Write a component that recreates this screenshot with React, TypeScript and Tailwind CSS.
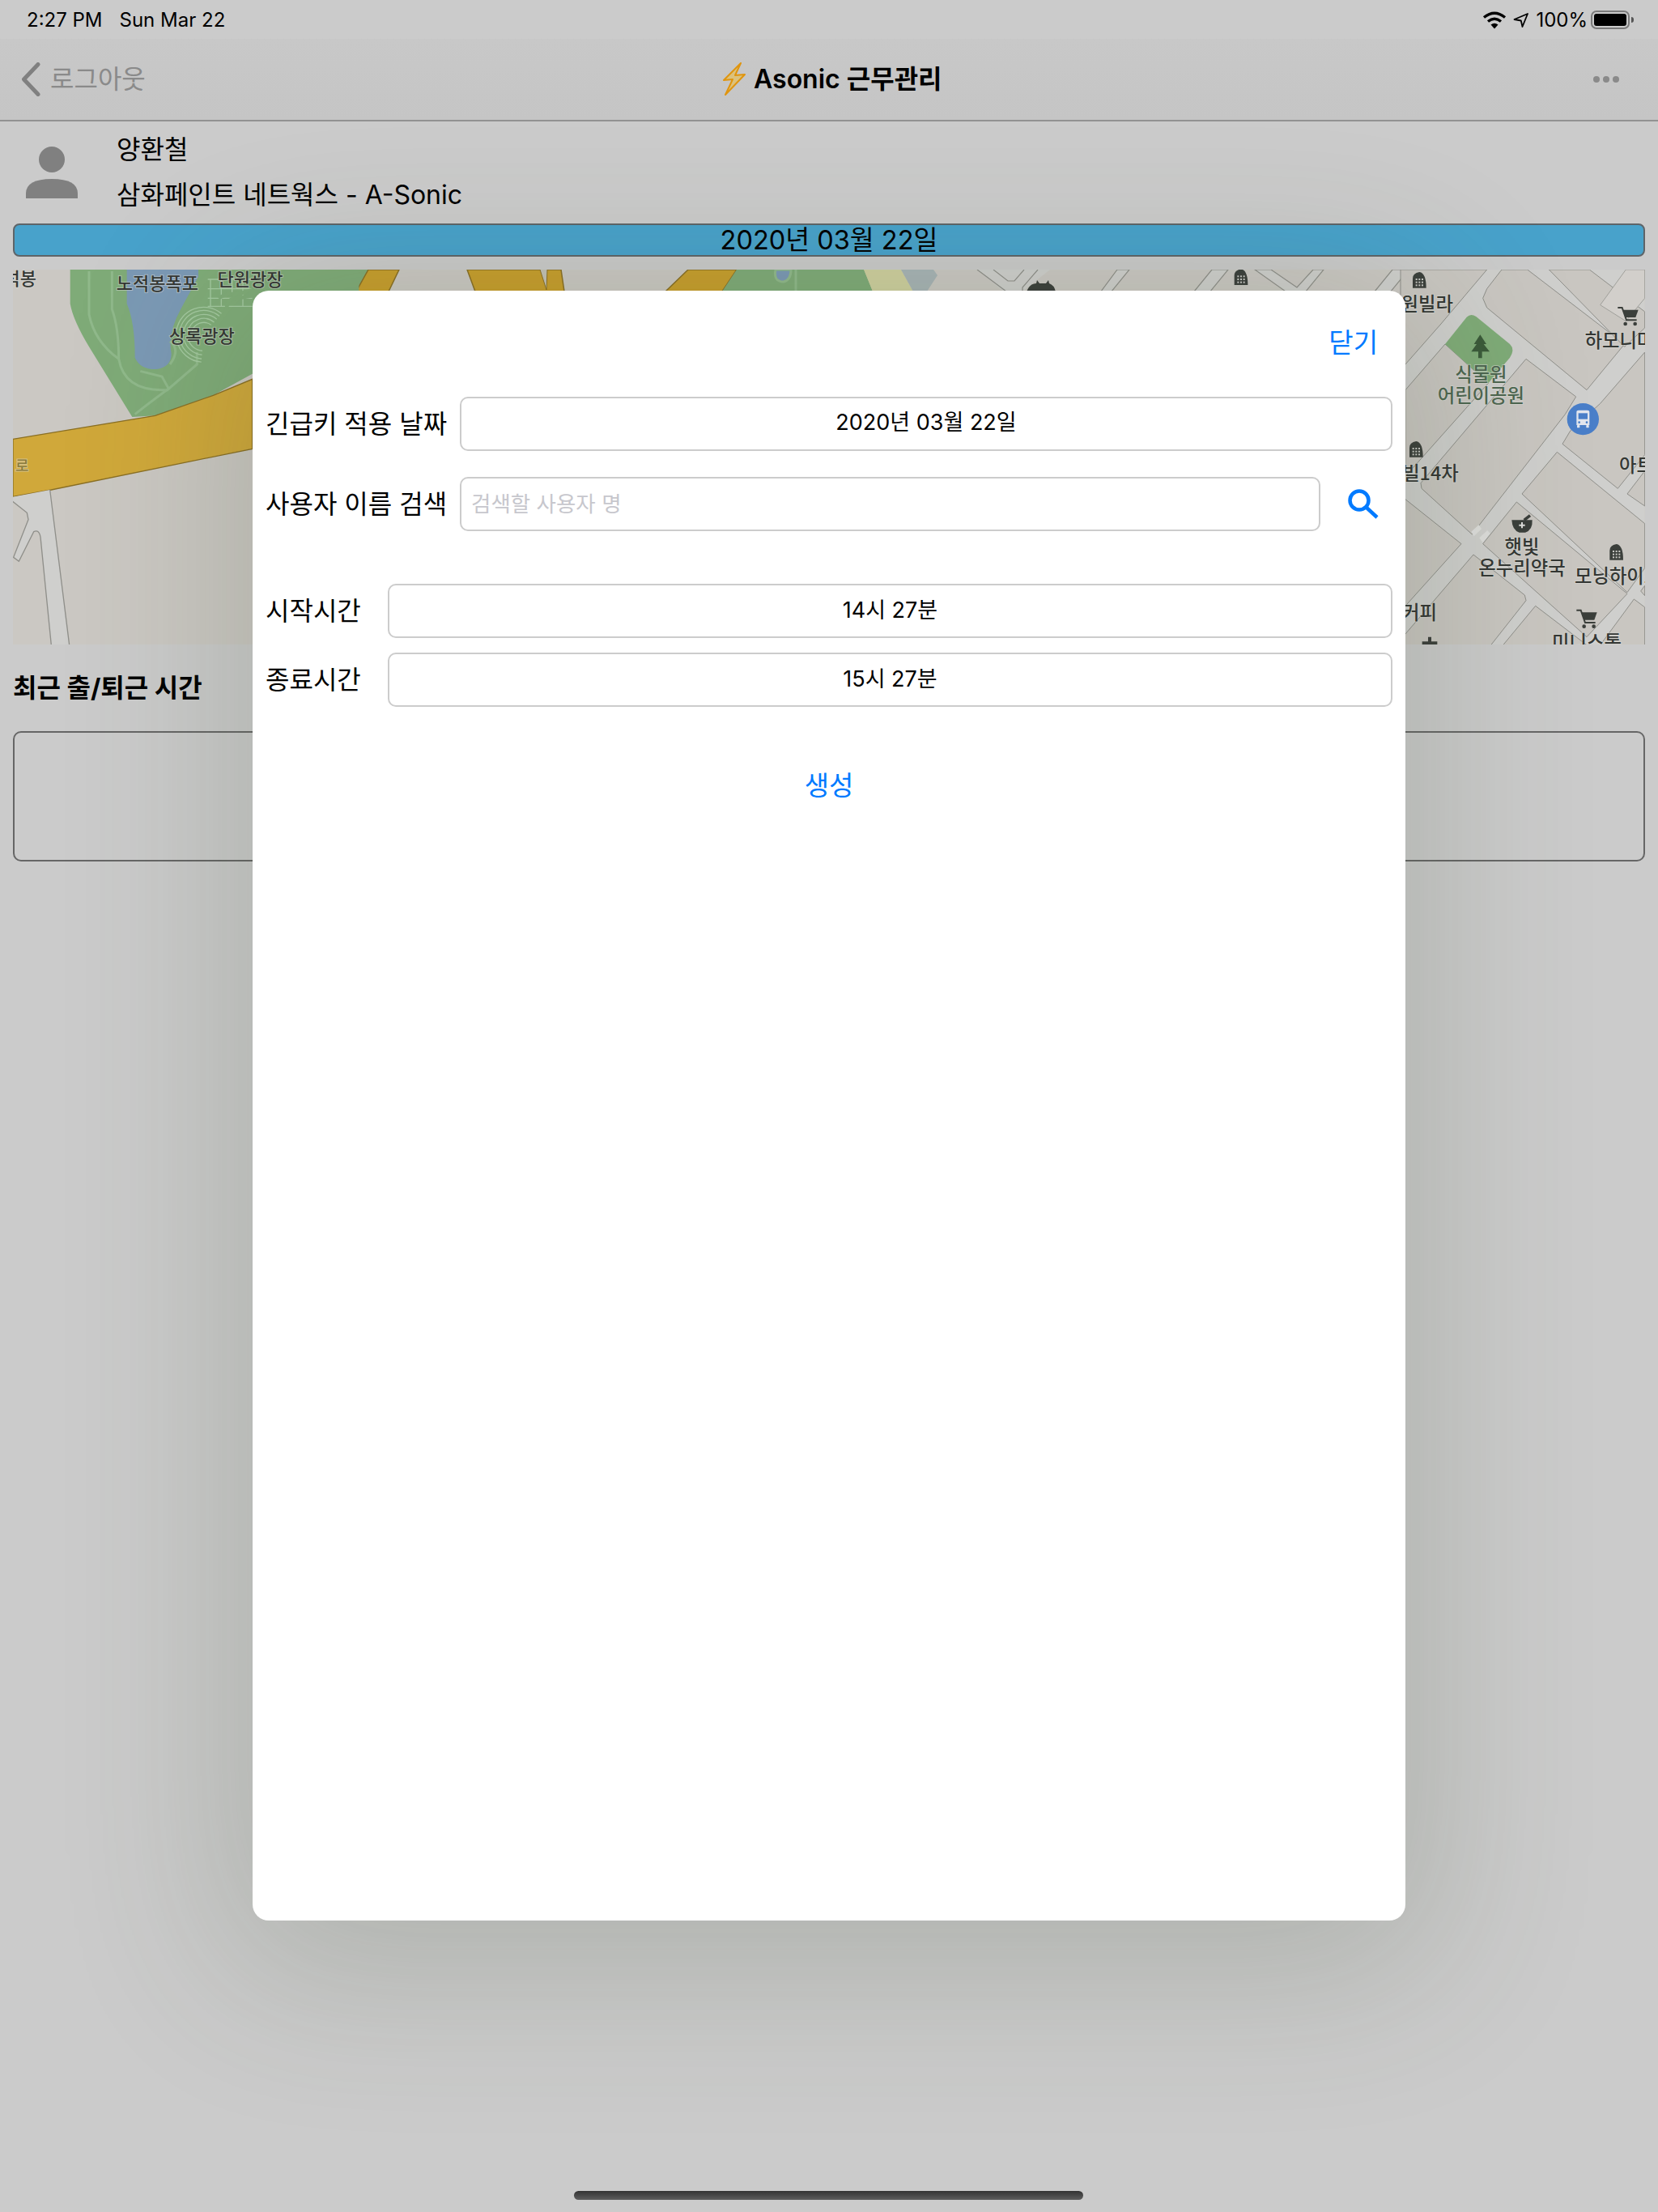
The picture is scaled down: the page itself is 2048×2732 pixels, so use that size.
const blocks = [
  "0,24 320,24 150,225 18,375 0,375",
  "375,24 470,24 830,300 690,470 320,165 305,130 320,95",
  "550,24 700,24 905,180 905,240 830,310",
  "18,470 165,300 325,445 18,790",
  "465,355 650,495 610,560 265,1005 78,835 75,815",
  "740,520 905,330 905,710 805,835 600,670 630,620",
  "580,700 905,965 905,1130 840,1220 450,855",
  "840,855 905,770 905,900",
  "430,885 840,1225 690,1385 305,1040",
  "0,875 18,875 225,1040 18,1270 0,1290",
  "270,1080 460,1230 465,1250 335,1415 0,1415 0,1395",
  "500,1270 690,1415 380,1415",
  "865,1245 905,1275 905,1415 740,1415",
  "890,1215 905,1195 905,1232",
];

function arc(r: number, from: number, to: number) {
  const cx = 725;
  const cy = 265;
  const p = (a: number) => {
    const t = (a * Math.PI) / 180;
    return `${(cx + r * Math.cos(t)).toFixed(1)},${(cy + r * Math.sin(t)).toFixed(1)}`;
  };
  return `M${p(from)} A${r},${r} 0 0 1 ${p(to)}`;
}

function Building({ x, y }: { x: number; y: number }) {
  return (
    <g transform={`translate(${x} ${y})`}>
      <path d="M-25,27 V-8 Q-25,-28 0,-32 Q25,-28 25,27 Z" fill="#3b3f3b" />
      {[-8, 3, 14].map((wy) =>
        [-14, -3, 8].map((wx) => <rect key={`${wx}-${wy}`} x={wx} y={wy} width="6" height="6" fill="#c8c8c4" />),
      )}
    </g>
  );
}

function Cart({ x, y }: { x: number; y: number }) {
  return (
    <g transform={`translate(${x} ${y})`}>
      <path d="M-40,-32 H-24 L-8,14 H30" fill="none" stroke="#3b3f3b" strokeWidth="6" />
      <path d="M-22,-24 H36 L26,4 H-12 Z" fill="#3b3f3b" />
      <circle cx="-12" cy="28" r="7" fill="#3b3f3b" />
      <circle cx="24" cy="28" r="7" fill="#3b3f3b" />
    </g>
  );
}

function MapLabel({ x, y, children, anchor = "middle", fill = "#343734", size = 66 }: { x: number; y: number; children: string; anchor?: "start" | "middle" | "end"; fill?: string; size?: number }) {
  return (
    <text
      x={x}
      y={y}
      textAnchor={anchor}
      fontSize={size}
      fontWeight={500}
      fontFamily="'Noto Sans CJK KR', sans-serif"
      fill={fill}
      stroke="#dcdcd8"
      strokeOpacity={0.5}
      strokeWidth={6}
      paintOrder="stroke"
      dominantBaseline="central"
    >
      {children}
    </text>
  );
}

function MapArt() {
  return (
    <svg viewBox="16 333 2016 463" className="block w-full h-full">
      <rect x="16" y="333" width="2016" height="463" fill="#cbc8c3" />
      {/* strip under the sheet's top edge */}
      <polygon points="300,333 1067,333 1078,360 300,360" fill="#7fab78" />
      <polygon points="422,333 442,333 422,360 403,360" fill="#a9c3a4" />
      <polygon points="493,333 850,333 823,360 480,360" fill="#cbc8c3" />
      <polygon points="455,333 493,333 480,360 440,360" fill="#c89e2c" stroke="#8a6f24" strokeWidth="1.5" />
      <polygon points="577,333 693,333 697,360 587,360" fill="#c89e2c" stroke="#8a6f24" strokeWidth="1.5" />
      <path d="M667,333 L675,358 L676,333" fill="#c4c1b4" stroke="#8a6f24" strokeWidth="1" />
      <polygon points="850,333 910,333 892,360 822,360" fill="#c89e2c" stroke="#8a6f24" strokeWidth="1.5" />
      <polygon points="910,333 1067,333 1078,360 892,360" fill="#7fab78" />
      <path d="M958,333 Q955,348 968,348 Q977,346 977,333 Z" fill="#7b99b5" stroke="#90b98b" strokeWidth="3" />
      <path d="M983,333 V360" stroke="#90b98b" strokeWidth="3" />
      <polygon points="1067,333 1113,333 1128,360 1078,360" fill="#cfd09f" />
      <polygon points="1113,333 1153,333 1158,340 1145,360 1128,360" fill="#a8b4b6" />
      <polygon points="1207,333 1297,333 1263,360 1240,360" fill="#cfcfcd" />
      <path d="M1207,333 L1243,360 M1282,333 L1263,355 V360" stroke="#8f8f8a" strokeWidth="1.2" fill="none" />
      <path d="M1227,333 L1245,347 H1253 L1265,333" stroke="#8f8f8a" strokeWidth="1.2" fill="none" />
      <path d="M1268,360 Q1272,350 1280,350 L1281,346 L1284,350 H1292 L1295,346 L1296,350 Q1302,352 1304,360 Z" fill="#3b3f3b" />
      {[
        "1380,333 1395,333 1373,360 1360,360",
        "1497,333 1517,333 1495,360 1475,360",
        "1550,333 1570,333 1602,355 1622,333 1635,333 1613,360 1588,360",
        "1720,333 1740,333 1718,360 1698,360",
      ].map((p) => (
        <polygon key={p} points={p} fill="#cfcfcd" stroke="#8f8f8a" strokeWidth="1.2" />
      ))}
      <g transform="translate(1533 343) scale(0.333)">
        <Building x={0} y={0} />
      </g>

      {/* left piece */}
      <g transform="translate(10 325) scale(0.33333)">
        <path d="M230,0 V150 Q240,210 300,310 L460,570 L545,565 L760,490 L905,410 L1300,200 V0 Z" fill="#7fab78" />
        <path d="M440,0 V150 Q470,220 470,350 Q490,395 550,393 Q605,385 605,335 Q590,260 640,170 L705,50 V0 Z" fill="#7b99b5" />
        <g fill="none" stroke="#90b98b" strokeWidth="9">
          <path d="M300,30 V190 Q320,290 410,355" />
          <path d="M385,30 V170 Q410,240 410,355 Q430,470 570,470 L590,470 L700,375 V330" />
          <path d="M470,560 Q520,520 595,465 L570,420 L490,400" />
          <path d="M600,375 Q640,320 600,290" />
        </g>
        <g fill="none" stroke="#a4c9a0" strokeWidth="4">
          {[45, 60, 75, 90, 102].map((r) => (
            <path key={r} d={arc(r, 190, 310)} />
          ))}
          {[60, 75, 90, 102].map((r) => (
            <path key={r} d={arc(r, 95, 165)} />
          ))}
          <path d="M740,60 H905 M740,95 H905 M740,130 H905 M740,160 H905 M750,60 V160 M790,60 V160 M830,60 V120 M870,60 V160" />
        </g>
        <path d="M780,130 Q810,110 850,115 L905,100 V120 L850,130 Q810,130 810,170 Q800,220 745,240" fill="none" stroke="#7fab78" strokeWidth="14" />
        <path d="M18,652 L545,565 L760,490 L905,430 V688 L160,840 L18,865 Z" fill="#d0a83a" stroke="#8a6f24" strokeWidth="4" />
        <path d="M18,885 L70,925 L75,950 L20,1090 L40,1105 L95,995 Q115,985 120,1015 L160,1415 H227 L155,840 L18,866 Z" fill="#cfcfcd" stroke="none" />
        <path d="M0,870 L70,925 L75,950 L20,1090 L40,1105 L95,995 Q115,985 120,1015 L160,1415 M227,1415 L155,840" fill="none" stroke="#8f8f8a" strokeWidth="4" />
        <MapLabel x={105} y={50} anchor="end">석봉</MapLabel>
        <MapLabel x={553} y={69}>노적봉폭포</MapLabel>
        <MapLabel x={897} y={55}>단원광장</MapLabel>
        <MapLabel x={718} y={265}>상록광장</MapLabel>
        <MapLabel x={52} y={748} fill="#8a7a3a" size={54}>로</MapLabel>
      </g>

      {/* right piece */}
      <g transform="translate(1730 325) scale(0.33333)">
        <rect x="0" y="24" width="905" height="1391" fill="#cfcfcd" />
        {blocks.map((p) => (
          <polygon key={p} points={p} fill="#c9c6c1" stroke="#8f8f8a" strokeWidth="3" strokeLinejoin="round" />
        ))}
        <polygon points="740,155 835,24 905,24 905,130 835,215" fill="#d2cfcb" stroke="#a0a09b" strokeWidth="3" />
        <path d="M165,300 L245,200 Q260,185 280,198 L405,300 Q425,320 405,350 L325,445 Z" fill="#7fab78" />
        <path d="M295,265 L318,300 H308 L330,328 H302 V352 H288 V328 H262 L282,300 H272 Z" fill="#3b5a3a" />
        <polygon points="262,995 290,970 300,985 272,1012" fill="#dededc" />
        <polygon points="292,1018 322,990 332,1002 305,1035" fill="#dededc" />
        <Building x={70} y={65} />
        <Building x={58} y={692} />
        <Building x={800} y={1073} />
        <Cart x={845} y={197} />
        <Cart x={692} y={1318} />
        <g>
          <path d="M412,952 H488 Q490,990 462,998 H440 Q414,990 412,952 Z" fill="#3b3f3b" />
          <path d="M458,952 L480,935" stroke="#3b3f3b" strokeWidth="11" />
          <path d="M450,960 V982 M439,971 H461" stroke="#dededc" strokeWidth="6" />
        </g>
        <path d="M108,1385 V1415 M80,1408 H136" stroke="#3b3f3b" strokeWidth="12" />
        <circle cx="676" cy="578" r="59" fill="#4a7fc9" />
        <g fill="#e2e6ee">
          <path d="M652,552 Q652,545 660,545 H692 Q700,545 700,552 V600 H652 Z" />
          <rect x="654" y="600" width="10" height="10" rx="2" />
          <rect x="688" y="600" width="10" height="10" rx="2" />
        </g>
        <rect x="659" y="556" width="34" height="22" fill="#4a7fc9" />
        <circle cx="662" cy="590" r="4" fill="#4a7fc9" />
        <circle cx="690" cy="590" r="4" fill="#4a7fc9" />
        <MapLabel x={195} y={147} anchor="end" size={70}>원빌라</MapLabel>
        <MapLabel x={298} y={408} fill="#4d6650" size={70}>식물원</MapLabel>
        <MapLabel x={298} y={485} fill="#4d6650" size={70}>어린이공원</MapLabel>
        <MapLabel x={683} y={283} anchor="start" size={70}>하모니마트</MapLabel>
        <MapLabel x={215} y={775} anchor="end" size={70}>탑빌14차</MapLabel>
        <MapLabel x={810} y={745} anchor="start" size={70}>아트빌</MapLabel>
        <MapLabel x={450} y={1048} size={70}>햇빛</MapLabel>
        <MapLabel x={450} y={1125} size={70}>온누리약국</MapLabel>
        <MapLabel x={645} y={1155} anchor="start" size={70}>모닝하이츠</MapLabel>
        <MapLabel x={135} y={1290} anchor="end" size={70}>커피</MapLabel>
        <MapLabel x={690} y={1400} size={70}>미니스톱</MapLabel>
      </g>
    </svg>
  );
}

function StatusBar() {
  return (
    <div className="h-[48px] flex items-center justify-between pl-[33px] pr-[30px] pt-[1px] text-[24px] text-black">
      <div className="flex gap-[21px]">
        <span>2:27 PM</span>
        <span>Sun Mar 22</span>
      </div>
      <div className="flex items-center">
        <svg width="30" height="22" viewBox="0 0 30 22" className="mr-[8px]">
          <g fill="none" stroke="#000" strokeWidth="3.4">
            <path d="M2,7.5 Q15,-3 28,7.5" />
            <path d="M7,12.5 Q15,6 23,12.5" />
          </g>
          <path d="M10.5,16.5 Q15,13 19.5,16.5 L15,21.5 Z" fill="#000" />
        </svg>
        <svg width="20" height="20" viewBox="0 0 20 20" className="mr-[8px]">
          <path d="M1.5,9 L18,2 L11.5,18 L9.8,10.5 Z" fill="none" stroke="#000" strokeWidth="1.8" strokeLinejoin="round" />
        </svg>
        <span className="mr-[4px]">100%</span>
        <div className="w-[48px] h-[23px] border-2 border-[#7a7a7a] rounded-[7px] p-[2px]">
          <div className="w-full h-full bg-black rounded-[3px]" />
        </div>
        <div className="w-[3px] h-[7px] ml-[2px] bg-[#555555] rounded-r-[3px]" />
      </div>
    </div>
  );
}

function NavBar() {
  return (
    <div className="h-[102px] relative flex items-center justify-between pl-[26px] pr-[48px] border-b-2 border-[#929292] bg-gradient-to-b from-[#c8c8c8] to-[#c5c5c5]">
      <div className="flex items-center gap-[12px] text-[#8a8a8a]">
        <svg width="24" height="42" viewBox="0 0 24 42">
          <path d="M21,2.5 L3.5,21 L21,39.5" fill="none" stroke="#808080" strokeWidth="5" strokeLinecap="round" strokeLinejoin="round" />
        </svg>
        <span className="text-[32px] leading-none">로그아웃</span>
      </div>
      <div className="absolute left-[893px] top-0 h-full flex items-center gap-[10px]">
        <svg width="28" height="42" viewBox="0 0 28 42">
          <path d="M22,1 L1,22 L12,21 L3,40 L27,15 L15,16 Z" fill="#dcc27c" stroke="#e0950f" strokeWidth="2" strokeLinejoin="round" />
        </svg>
        <span className="text-[32px] font-semibold leading-none text-black">Asonic 근무관리</span>
      </div>
      <div className="flex gap-[4px]">
        <div className="w-[8px] h-[8px] rounded-full bg-[#8a8a8a]" />
        <div className="w-[8px] h-[8px] rounded-full bg-[#8a8a8a]" />
        <div className="w-[8px] h-[8px] rounded-full bg-[#8a8a8a]" />
      </div>
    </div>
  );
}

function Sheet() {
  const input = "h-[67px] border-2 border-[#cccccc] rounded-[10px] flex items-center bg-white";
  const label = "text-[32px] leading-none text-black whitespace-nowrap";
  return (
    <div className="absolute left-[312px] top-[359px] w-[1424px] h-[2013px] bg-white rounded-[20px] shadow-[0_30px_210px_30px_rgba(60,75,50,0.2)] pl-[16px] pr-[16px] pt-[44px]">
      <div className="flex justify-end pr-[18px] h-[40px] items-center">
        <span className="text-[33px] text-[#007aff] leading-none">닫기</span>
      </div>
      <div className="flex items-center mt-[47px]">
        <div className={`${label} w-[240px]`}>긴급키 적용 날짜</div>
        <div className={`${input} flex-1 justify-center text-[27px] text-black pb-[2px]`}>2020년 03월 22일</div>
      </div>
      <div className="flex items-center mt-[32px]">
        <div className={`${label} w-[240px]`}>사용자 이름 검색</div>
        <div className={`${input} w-[1063px] justify-start pl-[12px] text-[26.5px] text-[#c7c7cd]`}>검색할 사용자 명</div>
        <svg width="40" height="38" viewBox="0 0 40 38" className="ml-[33px]">
          <circle cx="15" cy="14" r="11.5" fill="none" stroke="#007aff" strokeWidth="4.5" />
          <path d="M23.5,22.5 L37,35" stroke="#007aff" strokeWidth="4.5" />
        </svg>
      </div>
      <div className="flex items-center mt-[65px]">
        <div className={`${label} w-[151px]`}>시작시간</div>
        <div className={`${input} flex-1 justify-center text-[27px] text-black`}>14시 27분</div>
      </div>
      <div className="flex items-center mt-[18px]">
        <div className={`${label} w-[151px]`}>종료시간</div>
        <div className={`${input} flex-1 justify-center text-[27px] text-black`}>15시 27분</div>
      </div>
      <div className="flex justify-center items-center h-[40px] mt-[77px]">
        <span className="text-[33px] leading-none text-[#007aff]">생성</span>
      </div>
    </div>
  );
}

export default function App() {
  return (
    <div className="relative w-[2048px] h-[2732px] overflow-hidden bg-[#cbcbcb] font-['Inter','Noto_Sans_CJK_KR',sans-serif]">
      <StatusBar />
      <NavBar />
      <div className="h-[126px] flex pl-[32px] text-black">
        <svg width="64" height="64" viewBox="0 0 64 64" className="mt-[31px]">
          <ellipse cx="32" cy="16" rx="16" ry="16" fill="#808080" />
          <path d="M0,64 V58 Q0,40 32,40 Q64,40 64,58 V64 Z" fill="#808080" />
        </svg>
        <div className="ml-[48px] flex flex-col">
          <div className="h-[34px] mt-[18px] flex items-center text-[32px]">양환철</div>
          <div className="h-[34px] mt-[22px] flex items-center text-[32px]">삼화페인트 네트웍스 - A-Sonic</div>
        </div>
      </div>
      <div className="mx-[16px] h-[41px] border-2 border-[#5e6468] rounded-[8px] bg-[#48a2cb] flex items-center justify-center pt-[2px] text-[32.5px] leading-none text-black">
        2020년 03월 22일
      </div>
      <div className="mx-[16px] mt-[16px] h-[463px] overflow-hidden">
        <MapArt />
      </div>
      <div className="mx-[16px] mt-[34px] h-[40px] flex items-center text-[32px] font-bold text-black">최근 출/퇴근 시간</div>
      <div className="mx-[16px] mt-[33px] h-[161px] border-2 border-[#666666] rounded-[10px]" />
      <Sheet />
      <div className="absolute left-[709px] top-[2706px] w-[629px] h-[11px] rounded-full bg-gradient-to-b from-[#333333] to-[#5e5e5e]" />
    </div>
  );
}
